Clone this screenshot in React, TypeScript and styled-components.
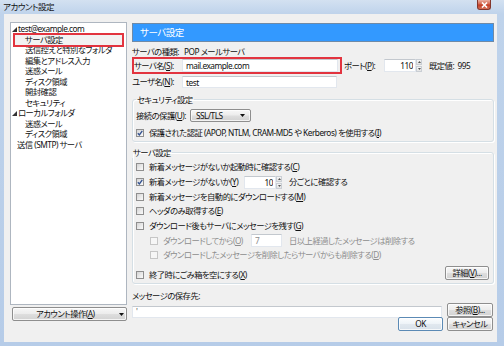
import React from 'react';
import styled, { createGlobalStyle, css } from 'styled-components';

const GlobalStyle = createGlobalStyle`
  html, body { margin: 0; padding: 0; background: #b9cfe9; }
  body {
    font-family: "Noto Sans", "Noto Sans CJK JP", sans-serif;
    font-size: 8.3px;
    letter-spacing: -0.5px;
    color: #111;
    font-feature-settings: "palt";
  }
  * { box-sizing: border-box; }
`;

const Window = styled.div`
  width: 504px;
  height: 346px;
  display: flex;
  flex-direction: column;
  padding: 0 7px 4px 4px;
  overflow: hidden;
  background: linear-gradient(180deg, #d3e1f1 0, #bfd3eb 14px, #b6cce8 100%);
`;

const TitleBar = styled.div`
  flex: none;
  height: 14px;
  display: flex;
  align-items: flex-start;
  margin: 0 -7px 0 -4px;
  padding: 0 13px 0 3px;
`;

const Title = styled.span`
  font-size: 8.5px;
  line-height: 14px;
  color: #111;
`;

const CloseBox = styled.div`
  margin-left: auto;
  width: 14px;
  height: 10px;
  border: 1px solid #83362c;
  border-top: none;
  border-radius: 0 0 3px 3px;
  background: linear-gradient(180deg, #eab0a2 0%, #d4644c 45%, #c23b22 55%, #d6725a 100%);
  display: flex;
  align-items: center;
  justify-content: center;
`;

const Client = styled.div`
  flex: 1;
  background: #f0f0f0;
  display: grid;
  grid-template-columns: 117px 1fr;
  column-gap: 5px;
  align-items: start;
  padding: 8px 3px 0 6px;
`;

const LeftPane = styled.div`
  display: flex;
  flex-direction: column;
`;

const Tree = styled.ul`
  margin: 0;
  padding: 1px 0 0;
  list-style: none;
  height: 283px;
  background: #fff;
  border: 1px solid #aeb6c0;
`;

const Node = styled.li<{ $indent: number; $selected?: boolean }>`
  display: flex;
  align-items: center;
  gap: 1px;
  height: 10.5px;
  line-height: 10.5px;
  white-space: nowrap;
  padding-left: ${p => p.$indent}px;
  ${p => p.$selected && css`
    margin: 0 4px;
    padding-left: ${p.$indent - 4}px;
    background: #f2f2f2;
    outline: 2px solid #e2343f;
  `}
`;

const Button = styled.button<{ $w: number; $default?: boolean }>`
  font: inherit;
  letter-spacing: inherit;
  font-feature-settings: inherit;
  color: #111;
  white-space: nowrap;
  width: ${p => p.$w}px;
  height: 14px;
  padding: 0;
  flex: none;
  border: 1px solid ${p => (p.$default ? '#5b8ab5' : '#8e8e8e')};
  border-radius: 2px;
  background: ${p => (p.$default
    ? 'linear-gradient(180deg, #fbfdfe 0%, #eef3f8 48%, #e1e8ef 52%, #d8e1ea 100%)'
    : 'linear-gradient(180deg, #f7f7f7 0%, #ececec 48%, #dedede 52%, #d2d2d2 100%)')};
  box-shadow: inset 0 0 0 1px rgba(255, 255, 255, 0.75);
  display: flex;
  align-items: center;
  justify-content: center;
  line-height: 12px;
`;

const MenuButton = styled(Button)`
  margin: 2px 0 0 2px;
  justify-content: flex-start;
  padding: 0 0 0 23px;
  gap: 24px;
`;

const RightPane = styled.div`
  display: flex;
  flex-direction: column;
  padding-top: 1px;
`;

const Header = styled.div`
  height: 19px;
  background: #3399ff;
  border: 1px solid #6f8aa7;
  color: #fff;
  font-size: 9.5px;
  line-height: 17px;
  padding-left: 7px;
`;

const Line = styled.div<{ $top: number; $h: number }>`
  display: flex;
  align-items: center;
  margin-top: ${p => p.$top}px;
  height: ${p => p.$h}px;
  white-space: nowrap;
`;

const Label = styled.span<{ $w?: number; $gap?: number; $muted?: boolean }>`
  flex: none;
  width: ${p => (p.$w ? `${p.$w}px` : 'auto')};
  margin-left: ${p => p.$gap ?? 0}px;
  color: ${p => (p.$muted ? '#8d8d8d' : 'inherit')};
  line-height: 12px;
`;

const Key = styled.span`
  text-decoration: underline;
`;

const RedFrame = styled.div`
  display: flex;
  align-items: center;
  width: 210px;
  height: 17px;
  border: 2px solid #e2343f;
`;

const Field = styled.input<{ $w: number; $h?: number; $right?: boolean; $muted?: boolean }>`
  font: inherit;
  letter-spacing: inherit;
  font-feature-settings: inherit;
  flex: none;
  width: ${p => p.$w}px;
  height: ${p => p.$h ?? 13}px;
  margin: 0;
  padding: 0 ${p => (p.$right ? 2 : 3)}px 0 3px;
  text-align: ${p => (p.$right ? 'right' : 'left')};
  color: ${p => (p.$muted ? '#8d8d8d' : '#111')};
  background: #fff;
  border: 1px solid #e2e7ee;
  border-top-color: #c3c8ce;
  outline: none;
`;

const Spinner = styled.div`
  flex: none;
  width: 6px;
  height: 13px;
  display: flex;
  flex-direction: column;
  gap: 1px;
`;

const SpinHalf = styled.div`
  flex: 1;
  border: 1px solid #c9ced4;
  background: linear-gradient(#f6f6f6, #e4e4e4);
  display: flex;
  align-items: center;
  justify-content: center;
`;

const Group = styled.fieldset<{ $top: number }>`
  margin: ${p => p.$top}px 0 0;
  padding: 0 4px 2px 3px;
  min-width: 0;
  border: 1px solid #d5dfe5;
  border-radius: 3px;
  box-shadow: inset 1px 1px 0 #fff, 1px 1px 0 #fff;
`;

const Legend = styled.legend<{ $inset: number }>`
  padding: 0 1px;
  margin-left: ${p => p.$inset}px;
  line-height: 11px;
`;

const Select = styled.div`
  width: 61px;
  height: 13px;
  flex: none;
  border: 1px solid #8e8e8e;
  border-radius: 2px;
  background: linear-gradient(180deg, #f7f7f7 0%, #ececec 48%, #dedede 52%, #d2d2d2 100%);
  box-shadow: inset 0 0 0 1px rgba(255, 255, 255, 0.7);
  display: flex;
  align-items: center;
  justify-content: space-between;
  padding: 0 5px 0 5px;
  line-height: 11px;
`;

const CheckItem = styled.div<{ $w?: number; $indent?: number; $muted?: boolean }>`
  display: flex;
  align-items: center;
  gap: 5px;
  flex: none;
  width: ${p => (p.$w ? `${p.$w}px` : 'auto')};
  margin-left: ${p => p.$indent ?? 0}px;
  color: ${p => (p.$muted ? '#8d8d8d' : 'inherit')};
  line-height: 12px;
  white-space: nowrap;
`;

const Box = styled.span<{ $muted?: boolean }>`
  width: 8px;
  height: 8px;
  flex: none;
  border: 1px solid ${p => (p.$muted ? '#c6c6c6' : '#8f8f8f')};
  background: ${p => (p.$muted
    ? '#f6f6f6'
    : 'linear-gradient(135deg, #d4d4d4 0%, #ececec 60%, #fafafa 100%)')};
  display: flex;
  align-items: center;
  justify-content: center;
`;

const GroupRows = styled.div`
  display: flex;
  flex-direction: column;
  margin-top: 2px;
`;

const LastRow = styled.div`
  display: flex;
  align-items: flex-end;
  justify-content: space-between;
  margin-top: 1px;
  height: 17px;
`;

const DetailButton = styled(Button)`
  margin-bottom: 1px;
`;

const PathRow = styled.div`
  display: flex;
  align-items: flex-start;
  justify-content: space-between;
  margin-top: 1px;
  padding-right: 1px;
`;

const PathField = styled(Field)`
  margin-top: 3px;
  color: #555;
`;

const Actions = styled.div`
  display: flex;
  justify-content: flex-end;
  gap: 4px;
  margin-top: -1px;
  padding-right: 1px;
`;

const Arrow = ({ size = 5 }: { size?: number }) => (
  <svg width={size} height={size} viewBox="0 0 5 5">
    <polygon points="5,0 5,5 0,5" fill="#333" />
  </svg>
);

const DropArrow = () => (
  <svg width="5" height="3" viewBox="0 0 5 3">
    <polygon points="0,0 5,0 2.5,3" fill="#111" />
  </svg>
);

const Tick = () => (
  <svg width="6" height="6" viewBox="0 0 6 6">
    <path d="M0.8 3.2 L2.4 4.9 L5.3 0.9" fill="none" stroke="#31508f" strokeWidth="1.3" />
  </svg>
);

const Check = ({ checked, muted, children, w, indent }: {
  checked?: boolean; muted?: boolean; children: React.ReactNode; w?: number; indent?: number;
}) => (
  <CheckItem $w={w} $indent={indent} $muted={muted}>
    <Box $muted={muted}>{checked && <Tick />}</Box>
    <span>{children}</span>
  </CheckItem>
);

const Spin = ({ w, value }: { w: number; value: string }) => (
  <>
    <Field $w={w} $right readOnly value={value} />
    <Spinner>
      <SpinHalf>
        <svg width="3" height="2" viewBox="0 0 3 2"><polygon points="0,2 3,2 1.5,0" fill="#555" /></svg>
      </SpinHalf>
      <SpinHalf>
        <svg width="3" height="2" viewBox="0 0 3 2"><polygon points="0,0 3,0 1.5,2" fill="#555" /></svg>
      </SpinHalf>
    </Spinner>
  </>
);

const tree = [
  { text: 'test@example.com', indent: 1, open: true },
  { text: 'サーバ設定', indent: 14, selected: true },
  { text: '送信控えと特別なフォルダ', indent: 14 },
  { text: '編集とアドレス入力', indent: 14 },
  { text: '迷惑メール', indent: 14 },
  { text: 'ディスク領域', indent: 14 },
  { text: '開封確認', indent: 14 },
  { text: 'セキュリティ', indent: 14 },
  { text: 'ローカルフォルダ', indent: 1, open: true },
  { text: '迷惑メール', indent: 14 },
  { text: 'ディスク領域', indent: 14 },
  { text: '送信 (SMTP) サーバ', indent: 6 },
];

export default function App() {
  return (
    <>
      <GlobalStyle />
      <Window>
        <TitleBar>
          <Title>アカウント設定</Title>
          <CloseBox>
            <svg width="7" height="6" viewBox="0 0 7 6">
              <path d="M1 0.5 L6 5.5 M6 0.5 L1 5.5" stroke="#fff" strokeWidth="1.6" />
            </svg>
          </CloseBox>
        </TitleBar>
        <Client>
          <LeftPane>
            <Tree>
              {tree.map((n, i) => (
                <Node key={i} $indent={n.indent} $selected={n.selected}>
                  {n.open && <Arrow />}
                  <span>{n.text}</span>
                </Node>
              ))}
            </Tree>
            <MenuButton $w={115}>
              <span>アカウント操作(<Key>A</Key>)</span>
              <DropArrow />
            </MenuButton>
          </LeftPane>

          <RightPane>
            <Header>サーバ設定</Header>

            <Line $top={4} $h={12}>
              <Label $w={52}>サーバの種類:</Label>
              <Label>POP メールサーバ</Label>
            </Line>

            <Line $top={-1} $h={17}>
              <RedFrame>
                <Label $w={48}>サーバ名(<Key>S</Key>):</Label>
                <Field $w={156} readOnly value="mail.example.com" />
              </RedFrame>
              <Label $w={40} $gap={2}>ポート(<Key>P</Key>):</Label>
              <Spin w={32} value="110" />
              <Label $gap={7}>既定値:&nbsp;&nbsp;995</Label>
            </Line>

            <Line $top={1} $h={14}>
              <Label $w={50}>ユーザ名(<Key>N</Key>):</Label>
              <Field $w={155} $h={12} readOnly value="test" />
            </Line>

            <Group $top={5}>
              <Legend $inset={0}>セキュリティ設定</Legend>
              <Line $top={4} $h={13}>
                <Label $w={54}>接続の保護(<Key>U</Key>):</Label>
                <Select>
                  <span>SSL/TLS</span>
                  <DropArrow />
                </Select>
              </Line>
              <Line $top={5} $h={12}>
                <Check checked>保護された認証 (APOP, NTLM, CRAM-MD5 や Kerberos) を使用する(<Key>I</Key>)</Check>
              </Line>
            </Group>

            <Group $top={5}>
              <Legend $inset={-4}>サーバ設定</Legend>
              <GroupRows>
                <Line $top={0} $h={14.7}>
                  <Check>新着メッセージがないか起動時に確認する(<Key>C</Key>)</Check>
                </Line>
                <Line $top={0} $h={14.7}>
                  <Check checked w={108}>新着メッセージがないか(<Key>Y</Key>)</Check>
                  <Spin w={32} value="10" />
                  <Label $gap={7}>分ごとに確認する</Label>
                </Line>
                <Line $top={0} $h={14.7}>
                  <Check>新着メッセージを自動的にダウンロードする(<Key>M</Key>)</Check>
                </Line>
                <Line $top={0} $h={14.7}>
                  <Check>ヘッダのみ取得する(<Key>E</Key>)</Check>
                </Line>
                <Line $top={0} $h={14.7}>
                  <Check>ダウンロード後もサーバにメッセージを残す(<Key>G</Key>)</Check>
                </Line>
                <Line $top={0} $h={14.7}>
                  <Check muted indent={14} w={101}>ダウンロードしてから(<Key>O</Key>)</Check>
                  <Field $w={31} $h={13} $muted readOnly value="7" />
                  <Label $gap={7} $muted>日以上経過したメッセージは削除する</Label>
                </Line>
                <Line $top={0} $h={14.7}>
                  <Check muted indent={14}>ダウンロードしたメッセージを削除したらサーバからも削除する(<Key>D</Key>)</Check>
                </Line>
                <LastRow>
                  <Check>終了時にごみ箱を空にする(<Key>X</Key>)</Check>
                  <DetailButton $w={44}>詳細(<Key>V</Key>)...</DetailButton>
                </LastRow>
              </GroupRows>
            </Group>

            <Line $top={6} $h={12}>
              <Label>メッセージの保存先:</Label>
            </Line>
            <PathRow>
              <PathField $w={310} $h={12} readOnly value="'" />
              <Button $w={46}>参照(<Key>B</Key>)...</Button>
            </PathRow>
            <Actions>
              <Button $w={45} $default>OK</Button>
              <Button $w={46}>キャンセル</Button>
            </Actions>
          </RightPane>
        </Client>
      </Window>
    </>
  );
}
